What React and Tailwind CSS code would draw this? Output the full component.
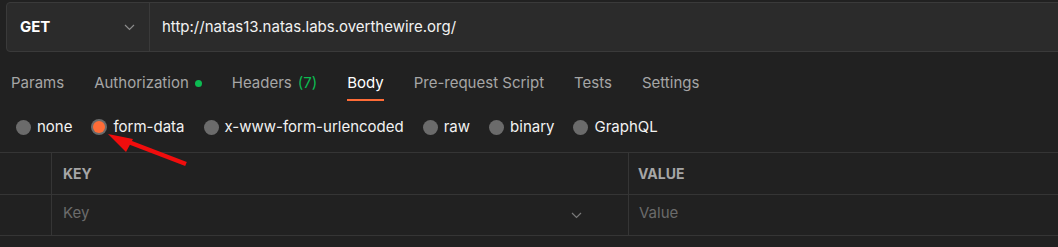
import React from 'react';

const tabs = [
  { label: 'Params' },
  { label: 'Authorization', dot: true },
  { label: 'Headers', count: '(7)' },
  { label: 'Body', active: true },
  { label: 'Pre-request Script' },
  { label: 'Tests' },
  { label: 'Settings' },
];

const bodyTypes = ['none', 'form-data', 'x-www-form-urlencoded', 'raw', 'binary', 'GraphQL'];

const Chevron = ({ className = '' }) => (
  <svg width="11" height="7" viewBox="0 0 11 7" className={className} fill="none">
    <path d="M1 1 L5.5 5.5 L10 1" stroke="currentColor" strokeWidth="1.2" />
  </svg>
);

const Radio = ({ checked }) =>
  checked ? (
    <span className="w-4 h-4 rounded-full bg-[#6b6b6b] flex items-center justify-center">
      <span className="w-3 h-3 rounded-full bg-[#ff6c37]" />
    </span>
  ) : (
    <span className="w-[15px] h-[15px] rounded-full bg-[#6b6b6b]" />
  );

export default function App() {
  return (
    <div
      className="relative w-[1058px] h-[247px] overflow-hidden bg-[#212121] text-[15px]"
      style={{ fontFamily: 'Inter, "Noto Sans", sans-serif' }}
    >
      {/* ── Request bar ── */}
      <div className="pt-[2px] pl-[6px]">
        <div className="flex w-[1070px] h-[50px] bg-[#2b2b2b] border border-[#3a3a3a] rounded-[4px]">
          <div className="w-[143px] flex items-center justify-between pl-[13px] pr-[14px] border-r border-[#3a3a3a]">
            <span className="font-bold text-white">GET</span>
            <Chevron className="text-[#8c8c8c]" />
          </div>
          <div className="flex items-center pl-[12px] text-[#f2f2f2]">
            http://natas13.natas.labs.overthewire.org/
          </div>
        </div>
      </div>

      {/* ── Tabs ── */}
      <div className="flex gap-[30px] pl-[11px] mt-[21px]">
        {tabs.map((t) => (
          <div
            key={t.label}
            className={`flex items-center gap-[6px] leading-5 pb-[6px] border-b-2 ${
              t.active ? 'border-[#ff6c37] text-white' : 'border-transparent text-[#a6a6a6]'
            }`}
          >
            <span>{t.label}</span>
            {t.count && <span className="text-[#0cbb52]">{t.count}</span>}
            {t.dot && <span className="w-[7px] h-[7px] rounded-full bg-[#0cbb52]" />}
          </div>
        ))}
      </div>

      {/* ── Body type radios ── */}
      <div className="flex items-center h-5 mt-[16px] pl-[16px] gap-[19px]">
        {bodyTypes.map((b) => (
          <div key={b} className="flex items-center gap-[6px] text-[#f2f2f2]">
            <Radio checked={b === 'form-data'} />
            <span>{b}</span>
          </div>
        ))}
      </div>

      {/* ── Key / Value table ── */}
      <div className="mt-[15px] border-t border-[#353535]">
        <div className="flex h-[42px] border-b border-[#353535]">
          <div className="w-[52px] border-r border-[#353535]" />
          <div className="w-[577px] border-r border-[#353535] flex items-center pl-[11px] text-[14px] font-bold text-[#a6a6a6]">
            KEY
          </div>
          <div className="flex-1 flex items-center pl-[9px] text-[14px] font-bold text-[#a6a6a6]">VALUE</div>
        </div>
        <div className="flex h-[41px] border-b border-[#353535]">
          <div className="w-[52px] border-r border-[#353535]" />
          <div className="w-[577px] border-r border-[#353535] flex items-center justify-between pl-[11px] pr-[46px] pb-[3px] text-[#6b6b6b]">
            <span>Key</span>
            <Chevron className="text-[#7a7a7a] mt-[3px]" />
          </div>
          <div className="flex-1 flex items-center pl-[10px] pb-[3px] text-[#6b6b6b]">Value</div>
        </div>
      </div>

      {/* ── Annotation arrow ── */}
      <svg className="absolute inset-0 pointer-events-none" width="1058" height="247">
        <line x1="186" y1="164" x2="126" y2="141" stroke="#f00d0d" strokeWidth="4.5" />
        <polygon points="108,134 133,139 126,152" fill="#f00d0d" />
      </svg>
    </div>
  );
}
